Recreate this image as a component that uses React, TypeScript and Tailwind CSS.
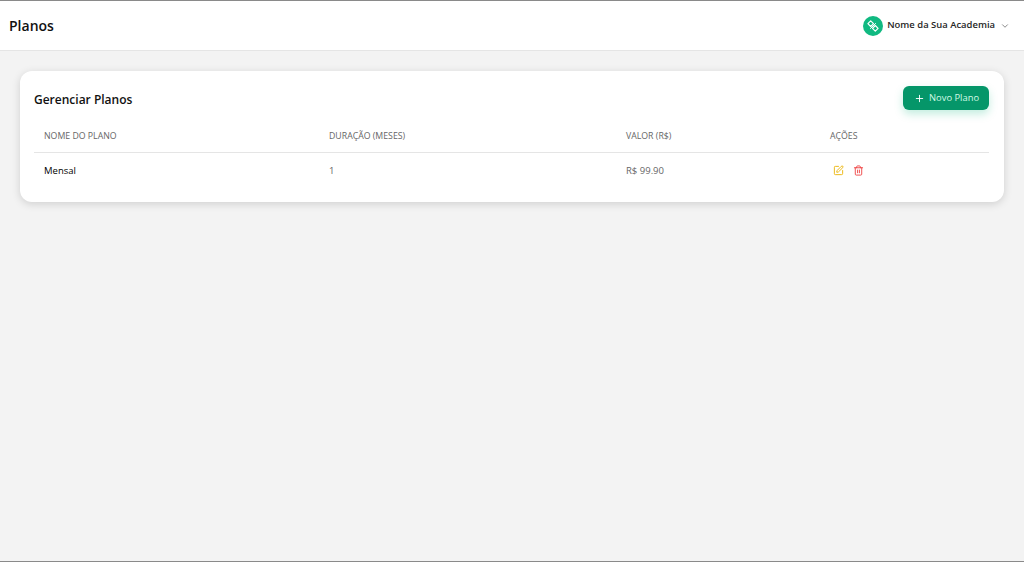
import { ChevronDown, Plus, SquarePen, Trash2 } from 'lucide-react';

const plans = [{ name: 'Mensal', months: 1, price: 'R$ 99.90' }];

// gym logo: two plates on the diagonal, joined by a short bar
function LogoIcon() {
	return (
		<svg viewBox="0 0 12 12" className="h-3 w-3" fill="none" stroke="currentColor" strokeWidth="1.2" strokeLinejoin="round">
			<path d="M3.7 .9L6.5 3.7 3.7 6.5 .9 3.7z" />
			<path d="M8.3 5.5L11.1 8.3 8.3 11.1 5.5 8.3z" />
			<path d="M3.2 8.8L8.8 3.2" strokeWidth="1" />
		</svg>
	);
}

function Header() {
	return (
		<header className="flex h-[49px] shrink-0 items-center justify-between bg-white pl-[9px] pr-[14px]">
			<h1 className="text-[14px] font-semibold leading-5 text-[#111111]">Planos</h1>
			<div className="flex items-center">
				<div className="flex h-5 w-5 items-center justify-center rounded-full bg-[#10b981] text-white">
					<LogoIcon />
				</div>
				<span className="ml-[4px] text-[9.45px] font-semibold text-[#262626]">Nome da Sua Academia</span>
				<ChevronDown className="ml-[5px] h-[10px] w-[10px] text-[#737373]" strokeWidth={2} />
			</div>
		</header>
	);
}

function PlansTable() {
	return (
		<table className="w-full table-fixed border-collapse">
			<thead>
				<tr className="border-b border-[#e5e5e5] text-left text-[8.75px] uppercase text-[#666666]">
					<th className="h-[31px] w-[285px] px-[10px] font-normal">Nome do Plano</th>
					<th className="w-[297px] px-[10px] font-normal">Duração (Meses)</th>
					<th className="w-[204px] px-[10px] font-normal">Valor (R$)</th>
					<th className="px-[10px] font-normal">Ações</th>
				</tr>
			</thead>
			<tbody>
				{plans.map((plan) => (
					<tr key={plan.name} className="h-[36px] text-[9.5px]">
						<td className="px-[10px] pt-[1px] font-medium text-black">{plan.name}</td>
						<td className="px-[10px] pt-[1px] text-[#666666]">{plan.months}</td>
						<td className="px-[10px] pt-[1px] text-[#666666]">{plan.price}</td>
						<td className="px-[10px]">
							<div className="ml-[3px] flex items-center gap-[9px]">
								<SquarePen className="h-[11px] w-[11px] text-[#eab308]" strokeWidth={2} />
								<Trash2 className="h-[11px] w-[11px] text-[#ef4444]" strokeWidth={2} />
							</div>
						</td>
					</tr>
				))}
			</tbody>
		</table>
	);
}

export default function App() {
	return (
		<div className="flex h-screen flex-col border-y border-[#8a8a8a] bg-[#f3f3f3] font-['Open_Sans',sans-serif]">
			<div className="border-b border-[#e5e5e5]">
				<Header />
			</div>
			<main className="px-5 pt-5">
				<section className="rounded-xl bg-white pb-[14px] pl-[14px] pr-[15px] pt-[15px] shadow-[0_2px_8px_rgba(0,0,0,0.15)]">
					<div className="flex h-[25px] items-start justify-between">
						<h2 className="mt-[5px] text-[12px] font-semibold text-[#111111]">Gerenciar Planos</h2>
						<button className="flex h-[24px] w-[86px] items-center gap-[4px] rounded-md bg-[#059669] pl-[11px] text-[9.4px] text-[#d1fae5] shadow-[0_4px_8px_rgba(16,185,129,0.25)]">
							<Plus className="h-[11px] w-[11px] text-white" strokeWidth={2} />
							Novo Plano
						</button>
					</div>
					<div className="mt-[10px]">
						<PlansTable />
					</div>
				</section>
			</main>
		</div>
	);
}
